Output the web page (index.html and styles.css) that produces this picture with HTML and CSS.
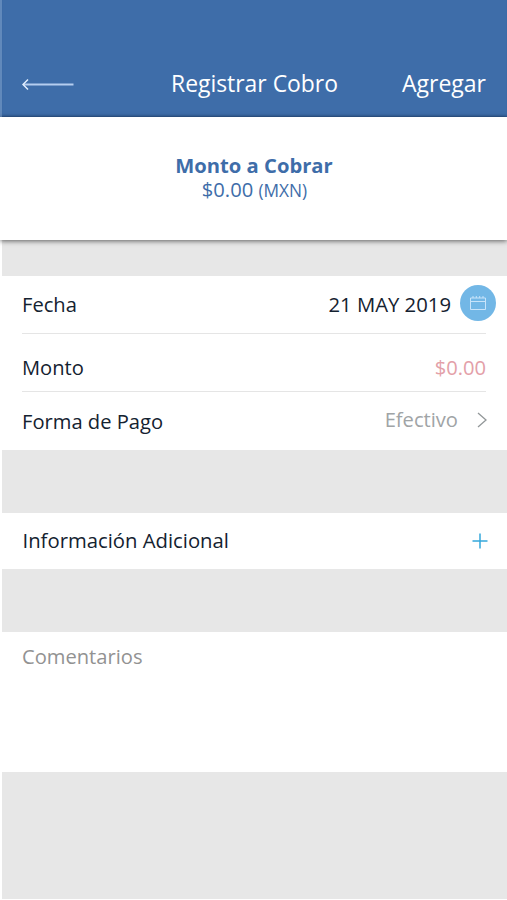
FILE: index.html
```html
<!DOCTYPE html>
<html lang="es">
<head>
<meta charset="utf-8">
<title>Registrar Cobro</title>
<link rel="stylesheet" href="styles.css">
</head>
<body>
<header class="bar">
  <svg class="back" width="52" height="14" viewBox="0 0 52 14"><path class="shaft" d="M2 7.500H51.500"/><path d="M6 2.500L1 7.500L6 12.500"/></svg>
  <h1 class="title">Registrar Cobro</h1>
  <span class="add">Agregar</span>
</header>
<section class="summary">
  <strong class="summary-title">Monto a Cobrar</strong>
  <span class="summary-amount">$0.00 <small>(MXN)</small></span>
</section>
<main class="content">
  <section class="panel details">
    <div class="row date"><span class="label">Fecha</span><span class="value">21 MAY 2019</span>
      <span class="calendar"><svg width="16" height="14" viewBox="0 0 16 14"><path d="M0.500 2H15.500V13.500H0.500ZM0.500 5.500H15.500M3 0V2M6.300 0V2M9.700 0V2M13 0V2"/></svg></span>
    </div>
    <div class="row amount"><span class="label">Monto</span><span class="value">$0.00</span></div>
    <div class="row method"><span class="label">Forma de Pago</span><span class="value">Efectivo</span>
      <svg class="chevron" width="10" height="16" viewBox="0 0 10 16"><path d="M1 1L9 8L1 15"/></svg>
    </div>
  </section>
  <section class="panel extra"><span class="label">Información Adicional</span>
    <svg class="plus" width="16" height="16" viewBox="0 0 16 16"><path d="M8 0.500V15.500M0.500 8H15.500"/></svg>
  </section>
  <section class="panel comments">Comentarios</section>
</main>
</body>
</html>
```
FILE: styles.css
```css
* { box-sizing: border-box; }
body { margin: 0; height: 900px; overflow: hidden; background: #fff; font-family: "Open Sans", sans-serif; font-size: 20.15px; line-height: 28px; color: #142230; }
svg { fill: none; flex: none; }
.bar { height: 117px; padding: 66px 21px 0 20px; display: grid; grid-template-columns: 149px 1fr auto; align-items: start; align-content: start; background: #3e6da9; border-left: 2px solid #6189bb; color: #fff; box-shadow: inset 0 -2px 2px -1px #2f5991; }
.back { stroke: #e2efff; stroke-width: 1.5; margin-top: 11px; }
.shaft { stroke: #b5cef0; stroke-width: 2; }
.title { margin: 0; padding-top: 1px; font-size: 22.9px; line-height: 34px; font-weight: 400; white-space: nowrap; }
.add { font-size: 23px; line-height: 34px; }
.summary { position: relative; height: 123px; padding-top: 36px; display: flex; flex-direction: column; align-items: center; background: #fff; color: #3e6da9; box-shadow: 0 1px 5px #0009; line-height: 24px; }
.summary-title { font-size: 20.2px; margin-left: 1px; }
.summary-amount { margin-left: 2px; }
.summary small { font-size: 17.3px; }
.content { margin-left: 2px; height: 659px; padding-top: 36px; background: #e7e7e7; }
.panel { background: #fff; padding-left: 20px; }
.details { height: 174px; padding-right: 21px; }
.row { display: flex; align-items: center; }
.label { flex: 1; }
.row .label { margin-top: -2px; }
.date { height: 58px; border-bottom: 1px solid #e5e5e5; }
.date .value { margin: -2px 9px 0 0; font-size: 20.3px; }
.calendar { width: 36px; height: 36px; margin: -3px -10px 0 0; border-radius: 50%; background: #72b7e6; display: flex; align-items: center; justify-content: center; }
.calendar svg { stroke: #c8e4fa; stroke-width: 1; }
.amount { height: 58px; padding-top: 11px; border-bottom: 1px solid #e5e5e5; }
.amount .value { color: #e3a0a8; margin-top: -2px; }
.method { height: 58px; padding-top: 2px; }
.method .value { color: #a0a4a6; margin: -6px 19px 0 0; }
.chevron { stroke: #929799; stroke-width: 1.3; margin: -4px -1px 0 0; }
.extra { margin-top: 63px; height: 56px; padding: 0 19px 0 20.500px; display: flex; align-items: center; font-size: 20.3px; }
.extra .label { margin-top: -3px; }
.plus { stroke: #35a8dc; stroke-width: 1.5; }
.comments { margin-top: 63px; height: 140px; padding-top: 10px; color: #929292; }
```
